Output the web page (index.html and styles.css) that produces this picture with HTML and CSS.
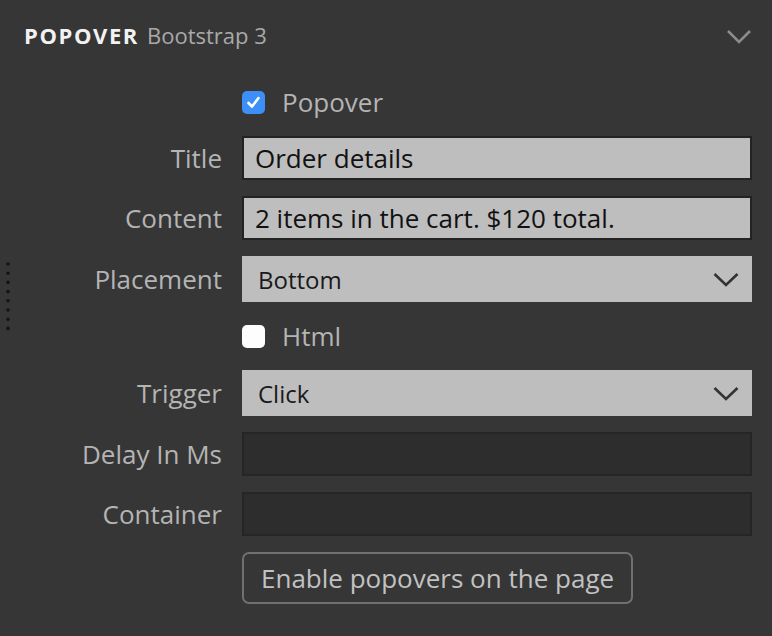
FILE: index.html
```html
<!DOCTYPE html>
<html lang="en">
<head>
<meta charset="utf-8">
<title>Popover</title>
<link rel="stylesheet" href="styles.css">
</head>
<body>
<div class="panel">
  <div class="handle" aria-hidden="true">
    <svg width="6" height="70" viewBox="0 0 6 70">
      <circle cx="3" cy="3" r="1.8"/><circle cx="3" cy="12.2" r="1.8"/><circle cx="3" cy="21.4" r="1.8"/><circle cx="3" cy="30.6" r="1.8"/>
      <circle cx="3" cy="39.8" r="1.8"/><circle cx="3" cy="49" r="1.8"/><circle cx="3" cy="58.2" r="1.8"/><circle cx="3" cy="67.4" r="1.8"/>
    </svg>
  </div>
  <header class="panel-head">
    <h2 class="title"><span class="name">POPOVER</span><span class="sub">Bootstrap 3</span></h2>
    <svg class="collapse" width="26" height="16" viewBox="0 0 26 16"><path d="M2 2 L13 13 L24 2" fill="none" stroke="#8c8c8c" stroke-width="2.6"/></svg>
  </header>
  <form class="form">
    <span class="label"></span>
    <label class="check"><span class="box on"><svg width="23" height="23" viewBox="0 0 23 23"><path d="M6.5 12 L10 15.5 L16.5 7" fill="none" stroke="#fff" stroke-width="2.6" stroke-linecap="round" stroke-linejoin="round"/></svg></span>Popover</label>

    <span class="label">Title</span>
    <input class="field light" type="text" value="Order details">

    <span class="label">Content</span>
    <input class="field light" type="text" value="2 items in the cart. $120 total.">

    <span class="label">Placement</span>
    <div class="select"><span>Bottom</span><svg width="26" height="16" viewBox="0 0 26 16"><path d="M1.5 2 L13 13 L24.5 2" fill="none" stroke="#333" stroke-width="2.6"/></svg></div>

    <span class="label"></span>
    <label class="check"><span class="box"></span>Html</label>

    <span class="label">Trigger</span>
    <div class="select"><span>Click</span><svg width="26" height="16" viewBox="0 0 26 16"><path d="M1.5 2 L13 13 L24.5 2" fill="none" stroke="#333" stroke-width="2.6"/></svg></div>

    <span class="label">Delay In Ms</span>
    <input class="field dark" type="text" value="">

    <span class="label">Container</span>
    <input class="field dark" type="text" value="">

    <span class="label"></span>
    <div class="actions"><button type="button" class="btn">Enable popovers on the page</button></div>
  </form>
</div>
</body>
</html>
```

FILE: styles.css
```css
html, body {
  margin: 0;
  padding: 0;
  background: #363636;
}

body {
  font-family: "Open Sans", "Liberation Sans", sans-serif;
  color: #b5b5b5;
}

.panel {
  position: relative;
  width: 772px;
  height: 636px;
  background: #363636;
  overflow: hidden;
}

.handle {
  position: absolute;
  left: 5px;
  top: 261px;
  line-height: 0;
}

.handle circle {
  fill: #141414;
}

.panel-head {
  box-sizing: border-box;
  height: 84px;
  padding: 20px 20px 0 24px;
  display: flex;
  justify-content: space-between;
  align-items: flex-start;
}

.title {
  margin: 0;
  font-size: 22px;
  line-height: 30px;
  font-weight: normal;
  display: flex;
  gap: 8px;
}

.name {
  font-weight: 700;
  color: #f2f2f2;
  letter-spacing: 1.6px;
}

.sub {
  color: #a9a9a9;
}

.collapse {
  margin-top: 9px;
  margin-right: 0;
}

.form {
  display: grid;
  grid-template-columns: 222px 510px;
  column-gap: 20px;
  row-gap: 16px;
  align-items: center;
  margin: 0;
}

.label {
  font-size: 26px;
  text-align: right;
  color: #b4b4b4;
  white-space: nowrap;
}

.check {
  height: 36px;
  display: flex;
  align-items: center;
  gap: 17px;
  font-size: 26px;
  color: #b4b4b4;
}

.box {
  width: 23px;
  height: 23px;
  border-radius: 5px;
  background: #fdfdfd;
  line-height: 0;
  flex: none;
}

.box.on {
  background: #3c8ff7;
}

.field {
  box-sizing: border-box;
  width: 510px;
  height: 44px;
  margin: 0;
  padding: 0 11px;
  border: 2px solid #232323;
  font-family: "Open Sans", "Liberation Sans", sans-serif;
  font-size: 26px;
  color: #111;
  outline: none;
}

.field.light {
  background: #bebebe;
}

.field.dark {
  background: #2d2d2d;
  border-color: #252525;
}

.select {
  box-sizing: border-box;
  height: 46px;
  padding: 0 13px 0 16px;
  background: #bebebe;
  display: flex;
  align-items: center;
  justify-content: space-between;
  font-size: 24px;
  color: #1a1a1a;
}

.select svg {
  margin-top: 1px;
}

.actions {
  display: flex;
}

.btn {
  box-sizing: border-box;
  height: 52px;
  padding: 0 17px;
  background: transparent;
  border: 2px solid #707070;
  border-radius: 7px;
  font-family: "Open Sans", "Liberation Sans", sans-serif;
  font-size: 26px;
  color: #c2c2c2;
}
```
